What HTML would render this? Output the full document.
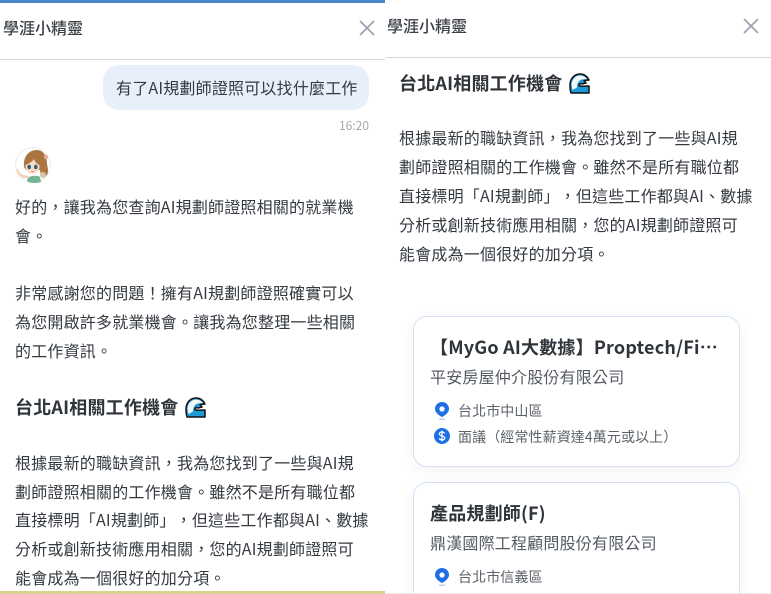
<!DOCTYPE html>
<html lang="zh-Hant"><head><meta charset="utf-8">
<style>
html,body{margin:0;padding:0;background:#fff}
#p{position:relative;width:771px;height:594px;overflow:hidden;background:#fff;font-family:"Noto Sans CJK TC","Liberation Sans",sans-serif;color:#333a44;text-spacing-trim:space-all}
#p>*{position:absolute}
.t{white-space:nowrap;line-height:29px;height:29px;font-size:16px;letter-spacing:.2px;color:#343a40}
.h{white-space:nowrap;line-height:30px;font-size:18px;font-weight:700;letter-spacing:.2px;color:#2f343a}
.hd{white-space:nowrap;line-height:24px;font-size:16px;font-weight:500;color:#3b4047}
.ct{white-space:nowrap;font-size:18px;font-weight:700;letter-spacing:.2px;color:#2f343a;line-height:26px}
.co{white-space:nowrap;font-size:16px;letter-spacing:.2px;color:#555b63;line-height:24px}
.m{white-space:nowrap;font-size:14px;letter-spacing:.1px;color:#5c6269;line-height:20px}
</style></head><body><div id="p">
<div style="left:0;top:0;width:385px;height:3px;background:#4a86c8"></div>
<div class="hd" style="left:3px;top:15px">學涯小精靈</div>
<svg style="left:359px;top:20px" width="16" height="16" viewBox="0 0 16 16"><path d="M1 1L15 15M15 1L1 15" stroke="#9aa3ad" stroke-width="1.7" fill="none"/></svg>
<div style="left:0;top:59px;width:385px;height:1px;background:#d6d8dc"></div>
<div style="left:103px;top:65px;width:266px;height:45px;border-radius:16px;background:#e7effb"></div>
<div class="t" style="left:116px;top:73px">有了AI規劃師證照可以找什麼工作</div>
<div style="right:402px;top:118px;font-size:12px;line-height:16px;color:#a3a8ae">16:20</div>
<svg style="left:14px;top:145px" width="38" height="39" viewBox="0 0 38 39">
<circle cx="19" cy="20" r="17.500" fill="#fff" stroke="#ececec"/>
<path d="M10 22C9 11 15 5 23 5C30 5 33 12 33 19C34 24 35 28 32 31L27 31L26 25L12 25Z" fill="#ab7440"/>
<path d="M13 35C14 30 24 30 26 32L27 37C22 38.500 17 38 14 37Z" fill="#74b394"/>
<path d="M4 23L5 27L9 30L15 31L15 33L9 33L4 29L2.500 25Z" fill="#f3cfb6"/>
<path d="M11.500 20C14 19 18 17 20 14C21 17 23 19 25.500 20C26 25 23 29 18.500 29C14 29 11 25 11.500 20Z" fill="#f9dcc8"/>
<ellipse cx="15.200" cy="22" rx="1.800" ry="2.200" fill="#2a6472"/><ellipse cx="21.800" cy="22" rx="1.800" ry="2.200" fill="#2a6472"/>
<path d="M17 26Q18.500 27.500 20 26" fill="#d0564f"/>
<circle cx="32" cy="12" r="2.200" fill="#eba9a0"/>
<circle cx="29" cy="30" r="3" fill="#d6c6a8"/>
</svg>
<div class="t" style="left:15px;top:192px">好的，讓我為您查詢AI規劃師證照相關的就業機</div>
<div class="t" style="left:15px;top:221px">會。</div>
<div class="t" style="left:15px;top:278px">非常感謝您的問題！擁有AI規劃師證照確實可以</div>
<div class="t" style="left:15px;top:307px">為您開啟許多就業機會。讓我為您整理一些相關</div>
<div class="t" style="left:15px;top:336px">的工作資訊。</div>
<div class="h" style="left:15px;top:392px">台北AI相關工作機會</div>
<svg style="left:185px;top:397px" width="21" height="21" viewBox="0 0 21 21"><path d="M1 12C1 5 6 1 11 1C15 1 18 3 20 7L15 7.500L17 10L13 11C11 10 10 11 10 12.500C12 14 16 13 20 13L20 20L2 20C1 17 1 15 1 12Z" fill="#1c9bd6" stroke="#111" stroke-width="1.500" stroke-linejoin="round"/><path d="M2.500 12C2.500 6 7 2.500 11 2.500C14 2.500 16.500 4 18 6L13 6.500C10 7 8 10 8 14.500L3.500 17Z" fill="#f1f6f8"/></svg>
<div class="t" style="left:15px;top:448px">根據最新的職缺資訊，我為您找到了一些與AI規</div>
<div class="t" style="left:15px;top:477px">劃師證照相關的工作機會。雖然不是所有職位都</div>
<div class="t" style="left:15px;top:505px">直接標明「AI規劃師」，但這些工作都與AI、數據</div>
<div class="t" style="left:15px;top:534px">分析或創新技術應用相關，您的AI規劃師證照可</div>
<div class="t" style="left:15px;top:563px">能會成為一個很好的加分項。</div>
<div style="left:0;top:591px;width:385px;height:3px;background:#d9d293"></div>

<div class="hd" style="left:387px;top:13px">學涯小精靈</div>
<svg style="left:743px;top:18px" width="16" height="16" viewBox="0 0 16 16"><path d="M1 1L15 15M15 1L1 15" stroke="#9aa3ad" stroke-width="1.7" fill="none"/></svg>
<div style="left:385px;top:57px;width:386px;height:1px;background:#d6d8dc"></div>
<div class="h" style="left:399px;top:68px">台北AI相關工作機會</div>
<svg style="left:569px;top:73px" width="21" height="21" viewBox="0 0 21 21"><path d="M1 12C1 5 6 1 11 1C15 1 18 3 20 7L15 7.500L17 10L13 11C11 10 10 11 10 12.500C12 14 16 13 20 13L20 20L2 20C1 17 1 15 1 12Z" fill="#1c9bd6" stroke="#111" stroke-width="1.500" stroke-linejoin="round"/><path d="M2.500 12C2.500 6 7 2.500 11 2.500C14 2.500 16.500 4 18 6L13 6.500C10 7 8 10 8 14.500L3.500 17Z" fill="#f1f6f8"/></svg>
<div class="t" style="left:399px;top:123px">根據最新的職缺資訊，我為您找到了一些與AI規</div>
<div class="t" style="left:399px;top:152px">劃師證照相關的工作機會。雖然不是所有職位都</div>
<div class="t" style="left:399px;top:181px">直接標明「AI規劃師」，但這些工作都與AI、數據</div>
<div class="t" style="left:399px;top:210px">分析或創新技術應用相關，您的AI規劃師證照可</div>
<div class="t" style="left:399px;top:239px">能會成為一個很好的加分項。</div>

<div style="box-sizing:border-box;left:413px;top:316px;width:327px;height:151px;background:#fff;border:1.500px solid #d3e0f8;border-radius:14px;box-shadow:0 4px 16px rgba(0,0,0,.05)"></div>
<div class="ct" style="left:430px;top:334px;width:288px;overflow:hidden;text-overflow:ellipsis">【MyGo AI大數據】Proptech/FinTech AI規劃師</div>
<div class="co" style="left:430px;top:364px">平安房屋仲介股份有限公司</div>
<svg style="left:434px;top:401px" width="16" height="20" viewBox="0 0 16 20"><path d="M8 1A7 7 0 0 1 15 8C15 11.500 11 14.500 8 16C5 14.500 1 11.500 1 8A7 7 0 0 1 8 1Z" fill="#1f6fe5"/><circle cx="8" cy="8" r="2.600" fill="#fff"/><rect x="5" y="17.500" width="6" height="1.500" rx=".7" fill="#b7cff5"/></svg>
<div class="m" style="left:458px;top:401px">台北市中山區</div>
<svg style="left:434px;top:428px" width="16" height="16" viewBox="0 0 16 16"><circle cx="8" cy="8" r="8" fill="#1f6fe5"/><path d="M10.700 5.500C10.200 4.500 9.200 4 8 4C6.500 4 5.400 4.800 5.400 6C5.400 8.600 10.700 7.400 10.700 10C10.700 11.200 9.500 12 8 12C6.700 12 5.700 11.400 5.300 10.400M8 2.800V13.200" stroke="#fff" stroke-width="1.300" fill="none"/></svg>
<div class="m" style="left:458px;top:427px">面議（經常性薪資達4萬元或以上）</div>

<div style="box-sizing:border-box;left:413px;top:482px;width:327px;height:112px;background:#fff;border:1.500px solid #d3e0f8;border-bottom:0;border-radius:14px 14px 0 0;box-shadow:0 4px 16px rgba(0,0,0,.05)"></div>
<div class="ct" style="left:430px;top:500px">產品規劃師(F)</div>
<div class="co" style="left:430px;top:530px">鼎漢國際工程顧問股份有限公司</div>
<svg style="left:434px;top:567px" width="16" height="20" viewBox="0 0 16 20"><path d="M8 1A7 7 0 0 1 15 8C15 11.500 11 14.500 8 16C5 14.500 1 11.500 1 8A7 7 0 0 1 8 1Z" fill="#1f6fe5"/><circle cx="8" cy="8" r="2.600" fill="#fff"/><rect x="5" y="17.500" width="6" height="1.500" rx=".7" fill="#b7cff5"/></svg>
<div class="m" style="left:458px;top:567px">台北市信義區</div>
<div style="left:385px;top:593px;width:386px;height:1px;background:#eceef0"></div>
</div></body></html>
